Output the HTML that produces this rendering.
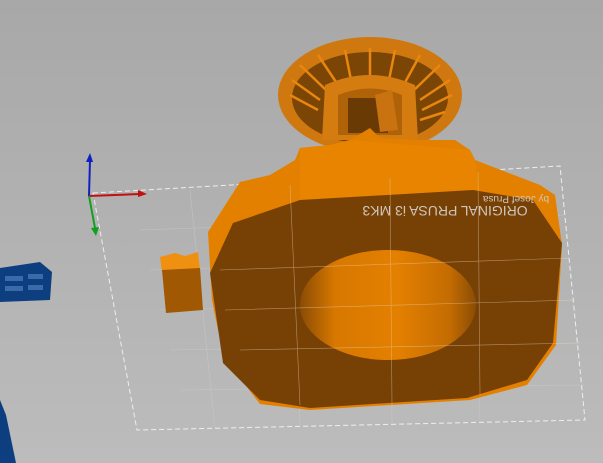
<!DOCTYPE html>
<html><head><style>
html,body{margin:0;padding:0;width:603px;height:463px;overflow:hidden;background:linear-gradient(#a8a8a8,#bcbcbc);}
svg{display:block}
</style></head><body>
<svg width="603" height="463" viewBox="0 0 603 463" xmlns="http://www.w3.org/2000/svg">
<defs>
<linearGradient id="hole" x1="0" y1="0" x2="1" y2="0"><stop offset="0" stop-color="#8a4c05"/><stop offset="0.2" stop-color="#d87800"/><stop offset="0.55" stop-color="#e48000"/><stop offset="0.85" stop-color="#c46c02"/><stop offset="1" stop-color="#8a4c05"/></linearGradient>
</defs>
<!-- bed grid -->
<g stroke="#c8c8c8" stroke-width="0.6" fill="none" opacity="0.8">
<path d="M140,230 L565,215 M150,270 L570,258 M160,310 L575,300 M170,350 L580,343 M180,390 L585,385"/>
<path d="M190,190 L215,428 M290,185 L300,425 M390,178 L392,423 M470,172 L480,422"/>
</g>
<path d="M93,193 L560,166 L585,420 L137,430 Z" fill="none" stroke="#eeeeee" stroke-width="1" stroke-dasharray="5,3"/>
<!-- tower -->
<ellipse cx="370" cy="95" rx="92" ry="58" fill="#d07810"/>
<ellipse cx="370" cy="98" rx="78" ry="46" fill="#7a4505"/>
<g stroke="#e8860e" stroke-width="2.5">
<path d="M290,95 L318,110 M292,80 L320,100 M300,65 L328,92 M318,55 L340,88 M345,50 L352,85 M370,48 L370,85 M395,50 L388,85 M420,55 L402,88 M440,65 L412,92 M450,80 L420,100 M452,95 L422,110 M445,112 L420,120"/>
</g>
<path d="M325,85 Q370,65 415,85 L418,140 L322,140 Z" fill="#d47c10"/>
<path d="M338,95 Q370,82 402,95 L402,135 L338,135 Z" fill="#b06208"/>
<rect x="348" y="98" width="40" height="35" fill="#6a3a04"/>
<path d="M375,95 L392,90 L398,130 L380,132 Z" fill="#c87210"/>
<!-- main block silhouette -->
<path d="M208,232 L240,182 L270,175 L295,160 L300,148 L330,145 L350,140 L370,128 L380,138 L420,140 L455,140 L470,150 L475,160 L540,185 L555,195 L562,245 L556,345 L527,385 L470,400 L310,410 L260,404 L230,365 L218,330 L212,300 Z" fill="#e38000"/>
<path d="M300,148 L330,145 L350,140 L470,150 L475,160 L478,190 L300,200 Z" fill="#e88400"/>
<!-- dark front face -->
<path d="M233,223 L300,200 L473,190 L533,200 L562,243 L553,343 L527,380 L467,398 L310,408 L260,400 L223,363 L210,273 Z" fill="#774106"/>
<ellipse cx="388" cy="305" rx="88" ry="55" fill="url(#hole)"/>
<text x="445" y="216" font-family="Liberation Sans,sans-serif" font-size="14" fill="#cfc6bb" text-anchor="middle" transform="rotate(180 445 211)">ORIGINAL PRUSA i3 MK3</text>
<text x="516" y="202" font-family="Liberation Sans,sans-serif" font-size="10" fill="#cfc6bb" text-anchor="middle" transform="rotate(180 516 199)">by Josef Prusa</text>
<!-- grid over block -->
<g stroke="#e6d0b0" stroke-width="0.6" opacity="0.55">
<path d="M290,185 L300,405 M390,178 L392,405 M478,172 L480,395 M220,270 L570,258 M225,310 L575,300 M240,350 L580,343"/>
</g>
<!-- small block -->
<path d="M160,257 L175,253 L185,256 L198,252 L200,270 L162,272 Z" fill="#f09010"/>
<path d="M162,270 L200,268 L203,310 L166,313 Z" fill="#a05802"/>
<!-- axes -->
<line x1="89" y1="196" x2="90" y2="160" stroke="#1020c0" stroke-width="2"/>
<path d="M86,162 L90,153 L93,162 Z" fill="#1020c0"/>
<line x1="89" y1="196" x2="140" y2="194" stroke="#c01010" stroke-width="2"/>
<path d="M138,190 L147,194 L138,197 Z" fill="#c01010"/>
<line x1="89" y1="196" x2="95" y2="228" stroke="#10a020" stroke-width="2"/>
<path d="M91,228 L96,236 L99,227 Z" fill="#10a020"/>
<!-- blue object -->
<path d="M0,268 L40,262 L52,272 L50,300 L0,302 Z" fill="#0d3e80"/>
<g fill="#3a6aa8">
<rect x="5" y="276" width="18" height="5"/><rect x="28" y="274" width="15" height="5"/>
<rect x="5" y="286" width="18" height="5"/><rect x="28" y="285" width="15" height="5"/>
</g>
<path d="M0,400 L6,415 L16,463 L0,463 Z" fill="#0d3e80"/>
</svg>
</body></html>
